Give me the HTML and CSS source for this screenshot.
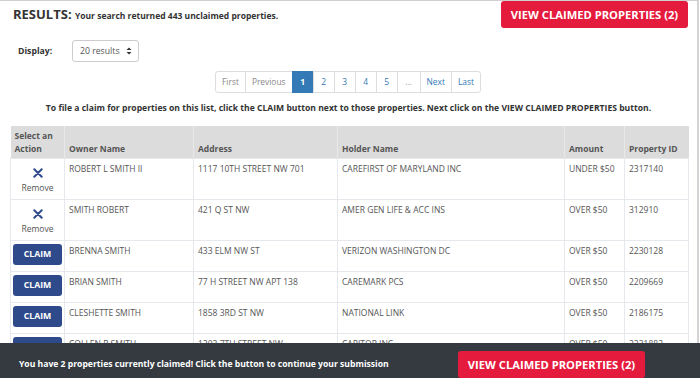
FILE: index.html
```html
<!DOCTYPE html>
<html lang="en">
<head>
    <meta charset="UTF-8">
    <meta name="viewport" content="width=device-width, initial-scale=1.0">
    <title>Unclaimed Property Search Results</title>
    <link rel="stylesheet" href="styles.css">
</head>
<body>
    <div class="page">
        <div class="results-top">
            <h1 class="results-title">RESULTS: <span>Your search returned 443 unclaimed properties.</span></h1>
            <button class="btn-claimed">VIEW CLAIMED PROPERTIES (2)</button>
        </div>

        <div class="display-row">
            <label>Display:</label>
            <div class="select-box">20 results
                <svg width="6" height="8" viewBox="0 0 6 8"><path d="M0.5 3 L3 0.5 L5.5 3 Z M0.5 5 L3 7.5 L5.5 5 Z" fill="#333"/></svg>
            </div>
        </div>

        <ul class="pagination">
            <li>First</li>
            <li>Previous</li>
            <li class="active">1</li>
            <li class="num">2</li>
            <li class="num">3</li>
            <li class="num">4</li>
            <li class="num">5</li>
            <li class="dots">...</li>
            <li class="num">Next</li>
            <li class="num">Last</li>
        </ul>

        <p class="instructions">To file a claim for properties on this list, click the CLAIM button next to those properties. Next click on the VIEW CLAIMED PROPERTIES button.</p>

        <table class="results">
            <thead>
                <tr>
                    <th class="col-action">Select an Action</th>
                    <th class="col-owner">Owner Name</th>
                    <th class="col-address">Address</th>
                    <th class="col-holder">Holder Name</th>
                    <th class="col-amount">Amount</th>
                    <th class="col-id">Property ID</th>
                </tr>
            </thead>
            <tbody>
                <tr class="claimed">
                    <td class="action">
                        <svg width="10" height="10" viewBox="0 0 10 10"><path d="M1.3 1.3 L8.7 8.7 M8.7 1.3 L1.3 8.7" stroke="#2e4a8b" stroke-width="2" stroke-linecap="round"/></svg>
                        <div class="remove">Remove</div>
                    </td>
                    <td>ROBERT L SMITH II</td>
                    <td>1117 10TH STREET NW 701</td>
                    <td>CAREFIRST OF MARYLAND INC</td>
                    <td>UNDER $50</td>
                    <td>2317140</td>
                </tr>
                <tr class="claimed">
                    <td class="action">
                        <svg width="10" height="10" viewBox="0 0 10 10"><path d="M1.3 1.3 L8.7 8.7 M8.7 1.3 L1.3 8.7" stroke="#2e4a8b" stroke-width="2" stroke-linecap="round"/></svg>
                        <div class="remove">Remove</div>
                    </td>
                    <td>SMITH ROBERT</td>
                    <td>421 Q ST NW</td>
                    <td>AMER GEN LIFE &amp; ACC INS</td>
                    <td>OVER $50</td>
                    <td>312910</td>
                </tr>
                <tr>
                    <td class="action"><button class="btn-claim">CLAIM</button></td>
                    <td>BRENNA SMITH</td>
                    <td>433 ELM NW ST</td>
                    <td>VERIZON WASHINGTON DC</td>
                    <td>OVER $50</td>
                    <td>2230128</td>
                </tr>
                <tr>
                    <td class="action"><button class="btn-claim">CLAIM</button></td>
                    <td>BRIAN SMITH</td>
                    <td>77 H STREET NW APT 138</td>
                    <td>CAREMARK PCS</td>
                    <td>OVER $50</td>
                    <td>2209669</td>
                </tr>
                <tr>
                    <td class="action"><button class="btn-claim">CLAIM</button></td>
                    <td>CLESHETTE SMITH</td>
                    <td>1858 3RD ST NW</td>
                    <td>NATIONAL LINK</td>
                    <td>OVER $50</td>
                    <td>2186175</td>
                </tr>
                <tr>
                    <td class="action"><button class="btn-claim">CLAIM</button></td>
                    <td>COLLEN R SMITH</td>
                    <td>1203 7TH STREET NW</td>
                    <td>CARITOR INC</td>
                    <td>OVER $50</td>
                    <td>2231882</td>
                </tr>
            </tbody>
        </table>
    </div>

    <div class="claim-bar">
        <span>You have 2 properties currently claimed! Click the button to continue your submission</span>
        <button class="btn-claimed btn-bar">VIEW CLAIMED PROPERTIES (2)</button>
    </div>
</body>
</html>
```

FILE: styles.css
```css
html, body {
    margin: 0;
    padding: 0;
    font-family: 'Open Sans', sans-serif;
    color: #333;
    background: #fff;
}

.page {
    width: 699px;
    height: 378px;
    overflow: hidden;
    border-top: 1px solid #cfcfcf;
    border-right: 2px solid #d4d4d4;
    box-sizing: border-box;
}

.results-top {
    display: flex;
    justify-content: space-between;
    align-items: flex-start;
    padding: 0 9px 0 13px;
}

.results-title {
    margin: 4px 0 0;
    font-size: 13px;
    font-weight: 700;
    line-height: 18px;
}

.results-title span {
    font-size: 8.5px;
}

.btn-claimed {
    background: #e51b3d;
    color: #fff;
    border: none;
    border-radius: 3px;
    font-family: 'Open Sans', sans-serif;
    font-weight: 700;
    font-size: 11.2px;
    width: 187px;
    height: 27px;
    padding: 0;
    cursor: pointer;
}

.display-row {
    display: flex;
    align-items: center;
    padding-left: 18px;
    margin-top: 12px;
    height: 22px;
}

.display-row label {
    font-size: 8.7px;
    font-weight: 700;
    width: 54px;
}

.select-box {
    display: flex;
    align-items: center;
    gap: 6px;
    border: 1px solid #ccc;
    border-radius: 3px;
    height: 20px;
    padding: 0 6px 0 7px;
    font-size: 8.7px;
    color: #555;
}

.pagination {
    list-style: none;
    margin: 9px 0 0;
    padding: 0;
    display: flex;
    justify-content: center;
}

.pagination li {
    font-size: 8.4px;
    color: #888;
    border: 1px solid #ddd;
    margin-left: -1px;
    height: 20px;
    line-height: 20px;
    padding: 0 6px;
    min-width: 8px;
    text-align: center;
}

.pagination li:first-child {
    border-radius: 3px 0 0 3px;
}

.pagination li:last-child {
    border-radius: 0 3px 3px 0;
}

.pagination li.num {
    color: #337ab7;
}

.pagination li.active {
    background: #337ab7;
    border-color: #337ab7;
    color: #fff;
    font-weight: 700;
}

.pagination li.dots {
    color: #999;
    padding: 0 7px;
}

.instructions {
    margin: 8px 0 0;
    text-align: center;
    font-size: 8.6px;
    font-weight: 700;
    line-height: 15px;
}

table.results {
    margin: 10px 0 0 10px;
    width: 678px;
    table-layout: fixed;
    border-collapse: collapse;
    font-size: 8.5px;
    color: #555;
}

.results th {
    background: #dcdcdc;
    text-align: left;
    vertical-align: bottom;
    font-weight: 700;
    height: 32px;
    line-height: 13px;
    padding: 0 4px 3px;
    border-left: 1px solid #e8e8e8;
    box-sizing: border-box;
}

.results th:first-child {
    border-left: none;
}

.col-action { width: 54px; }
.col-owner { width: 129px; }
.col-address { width: 144px; }
.col-holder { width: 227px; }
.col-amount { width: 60px; }
.col-id { width: 64px; }

.results td {
    vertical-align: top;
    padding: 3px 4px;
    height: 31px;
    line-height: 14px;
    border: 1px solid #e6e8ee;
    box-sizing: border-box;
}

.results tr.claimed td {
    height: 41px;
}

.results td.action {
    text-align: center;
    padding: 3px 2px;
}

.results tr.claimed td.action {
    padding-top: 9px;
    line-height: 12px;
}

.remove {
    margin-top: 1px;
    font-size: 8.5px;
    color: #555;
}

.btn-claim {
    background: #2e4a8b;
    color: #fff;
    border: none;
    border-radius: 3px;
    font-family: 'Open Sans', sans-serif;
    font-weight: 700;
    font-size: 8.7px;
    width: 49px;
    height: 21px;
    padding: 0;
}

.claim-bar {
    position: fixed;
    left: 0;
    right: 0;
    bottom: 0;
    height: 35px;
    background: #343a40;
    color: #fff;
    display: flex;
    align-items: flex-start;
    padding-left: 19px;
}

.claim-bar span {
    font-size: 8.6px;
    font-weight: 700;
    margin-top: 15px;
    width: 439px;
}

.btn-bar {
    margin-top: 8px;
}
```
